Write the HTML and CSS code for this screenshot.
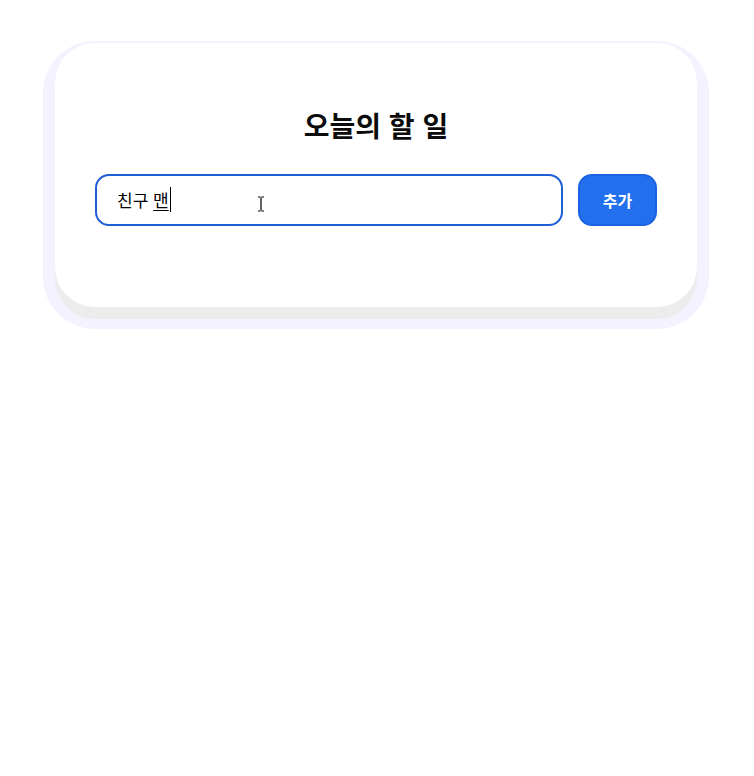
FILE: index.html
```html
<!DOCTYPE html>
<html lang="ko">
<head>
  <meta charset="UTF-8">
  <meta name="viewport" content="width=device-width, initial-scale=1.0">
  <title>오늘의 할 일</title>
  <link rel="stylesheet" href="styles.css">
</head>
<body>

  <div class="page">
    <div class="todo-card">
      <h1 class="title">오늘의 할 일</h1>
      <div class="todo-form">
        <div class="todo-input">친구 <span class="composing">맨</span>
          <!-- 마우스 커서 -->
          <svg class="ibeam" width="8" height="16" viewBox="0 0 8 16">
            <path d="M1 1h2.5M4.5 1H7M4 1.5v13M1 15h2.5M4.5 15H7" stroke="#000" stroke-width="1.2" fill="none"/>
          </svg>
        </div>
        <button class="add-button">추가</button>
      </div>
    </div>
  </div>

</body>
</html>
```

FILE: styles.css
```css
* {
  margin: 0;
  padding: 0;
  box-sizing: border-box;
}

html, body {
  background: #fff;
}

body {
  font-family: "Noto Sans CJK KR", "Noto Sans", sans-serif;
  color: #111;
}

.page {
  min-height: 776px;
  padding: 43px 0 0 55px;
}

.todo-card {
  position: relative;
  width: 642px;
  padding: 64px 40px 81px;
  background: #fff;
  border-radius: 40px;
  box-shadow: 0 12px 0 #ececec, 0 10px 0 12px #f3f2fe;
}

.title {
  font-size: 28px;
  font-weight: 700;
  line-height: 36px;
  text-align: center;
  margin-bottom: 31px;
  color: #0c0c0c;
}

.todo-form {
  display: flex;
  gap: 15px;
}

.todo-input {
  flex: 1;
  position: relative;
  height: 52px;
  border: 2px solid #1f5fd4;
  border-radius: 14px;
  padding: 0 20px;
  font-size: 17px;
  line-height: 48px;
  color: #000;
}

.composing {
  text-decoration: underline;
  text-underline-offset: 3px;
  border-right: 1px solid #000;
  padding-right: 1px;
}

.ibeam {
  position: absolute;
  left: 160px;
  top: 20px;
}

.add-button {
  width: 79px;
  height: 52px;
  background: #2370ef;
  border: 2px solid #1c60e3;
  border-radius: 14px;
  color: #fff;
  font-family: inherit;
  font-size: 16px;
  font-weight: 700;
  cursor: pointer;
}
```
